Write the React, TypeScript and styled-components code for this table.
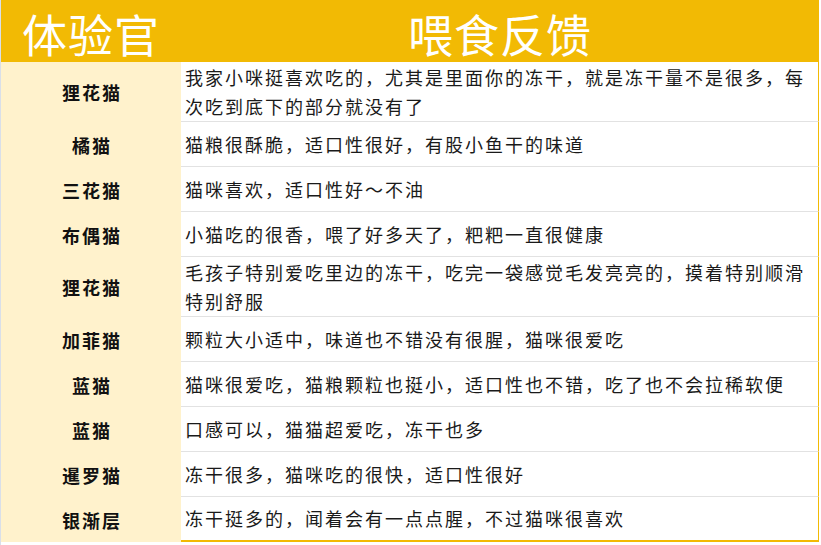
import React from "react";
import styled, { createGlobalStyle } from "styled-components";

const GlobalStyle = createGlobalStyle`
  html, body {
    margin: 0;
    padding: 0;
    background: #ffffff;
  }
  * { box-sizing: border-box; }
`;

const YELLOW = "#f2ba04";
const CREAM = "#fff2cc";
const FONT = `"Noto Sans CJK SC", "Noto Sans", sans-serif`;

const Page = styled.div`
  width: 821px;
  height: 545px;
  background: #ffffff;
  border-left: 1px solid #d9dfe9;
  font-family: ${FONT};
`;

const Sheet = styled.div`
  width: 818px;
  display: flex;
  flex-direction: column;
`;

const Header = styled.div`
  display: grid;
  grid-template-columns: 180px 1fr;
  height: 62px;
  background: ${YELLOW};
`;

const HeaderCell = styled.div`
  display: flex;
  align-items: center;
  justify-content: center;
  color: #ffffff;
  font-size: 45px;
  font-weight: 400;
  letter-spacing: 1px;
  padding-top: 4px;
  line-height: 1;
`;

const Row = styled.div<{ $tall?: boolean }>`
  display: grid;
  grid-template-columns: 180px 1fr;
  height: ${(p) => (p.$tall ? 60 : 45)}px;
`;

const NameCell = styled.div`
  background: ${CREAM};
  display: flex;
  align-items: center;
  justify-content: center;
  font-size: 18px;
  font-weight: 700;
  color: #111111;
  letter-spacing: 2px;
  padding-left: 2px;
`;

const TextCell = styled.div<{ $last?: boolean }>`
  display: flex;
  align-items: center;
  padding: 0 0 0 4px;
  background: #ffffff;
  border-right: 1px solid ${YELLOW};
  border-bottom: ${(p) => (p.$last ? `2px solid ${YELLOW}` : "1px solid #e2e2e2")};
  font-size: 18px;
  line-height: 29px;
  letter-spacing: 2px;
  color: #1a1a1a;
`;

const rows: { name: string; text: string; tall?: boolean }[] = [
  {
    name: "狸花猫",
    text: "我家小咪挺喜欢吃的，尤其是里面你的冻干，就是冻干量不是很多，每次吃到底下的部分就没有了",
    tall: true,
  },
  { name: "橘猫", text: "猫粮很酥脆，适口性很好，有股小鱼干的味道" },
  { name: "三花猫", text: "猫咪喜欢，适口性好～不油" },
  { name: "布偶猫", text: "小猫吃的很香，喂了好多天了，粑粑一直很健康" },
  {
    name: "狸花猫",
    text: "毛孩子特别爱吃里边的冻干，吃完一袋感觉毛发亮亮的，摸着特别顺滑特别舒服",
    tall: true,
  },
  { name: "加菲猫", text: "颗粒大小适中，味道也不错没有很腥，猫咪很爱吃" },
  { name: "蓝猫", text: "猫咪很爱吃，猫粮颗粒也挺小，适口性也不错，吃了也不会拉稀软便" },
  { name: "蓝猫", text: "口感可以，猫猫超爱吃，冻干也多" },
  { name: "暹罗猫", text: "冻干很多，猫咪吃的很快，适口性很好" },
  { name: "银渐层", text: "冻干挺多的，闻着会有一点点腥，不过猫咪很喜欢" },
];

export default function App() {
  return (
    <>
      <GlobalStyle />
      <Page>
        <Sheet>
          <Header>
            <HeaderCell>体验官</HeaderCell>
            <HeaderCell>喂食反馈</HeaderCell>
          </Header>
          {rows.map((r, i) => (
            <Row key={i} $tall={r.tall}>
              <NameCell>{r.name}</NameCell>
              <TextCell $last={i === rows.length - 1}>
                <span>{r.text}</span>
              </TextCell>
            </Row>
          ))}
        </Sheet>
      </Page>
    </>
  );
}
